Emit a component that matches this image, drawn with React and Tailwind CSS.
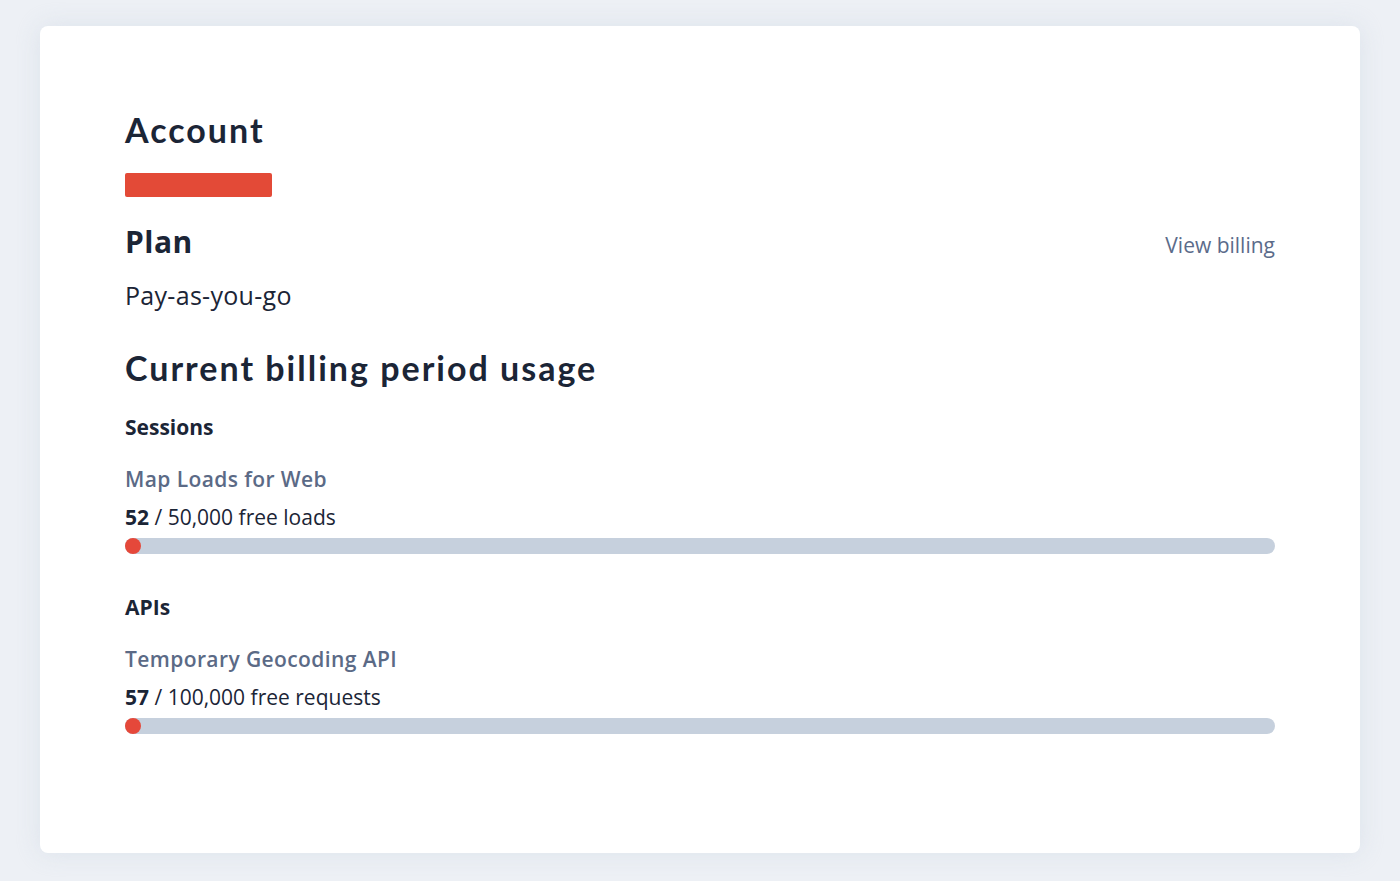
import React from "react";

function Usage({ title, used, total, unit }) {
  return (
    <div className="flex flex-col">
      <div className="mt-[24px] font-['Open_Sans',sans-serif] text-[21px] leading-[28px] font-semibold tracking-[0.4px] text-[#5b6a86]">
        {title}
      </div>
      <div className="mt-[10px] font-['Open_Sans',sans-serif] text-[21px] leading-[28px] text-[#1b2536]">
        <span className="font-bold">{used}</span> / {total} {unit}
      </div>
      <div className="mt-[7px] flex h-[16px] w-full rounded-full bg-[#c6d0dd]">
        <div className="h-[16px] w-[16px] rounded-full bg-[#e5483a]" />
      </div>
    </div>
  );
}

export default function App() {
  return (
    <div className="min-h-[881px] bg-[#edf0f5] px-[40px] pt-[26px] pb-[28px]">
      <div className="flex h-[827px] flex-col rounded-[8px] bg-white px-[85px] pt-[84px] shadow-[0_0_24px_rgba(200,210,225,0.45)]">
        <h1 className="font-['Lato',sans-serif] text-[34px] leading-[40px] font-bold tracking-[2px] text-[#1b2536]">
          Account
        </h1>
        <div className="mt-[23px] h-[24px] w-[147px] rounded-[2px] bg-[#e34a37]" />
        <div className="mt-[28px] flex items-baseline justify-between">
          <h2 className="font-['Open_Sans',sans-serif] text-[30px] leading-[34px] font-bold tracking-[0.5px] text-[#1b2536]">
            Plan
          </h2>
          <span className="font-['Open_Sans',sans-serif] text-[21px] leading-[28px] text-[#5b6b8a]">
            View billing
          </span>
        </div>
        <div className="mt-[21px] font-['Open_Sans',sans-serif] text-[25px] leading-[30px] tracking-[0.3px] text-[#1b2536]">
          Pay-as-you-go
        </div>
        <h2 className="mt-[38px] font-['Lato',sans-serif] text-[34px] leading-[40px] font-bold tracking-[2px] text-[#1b2536]">
          Current billing period usage
        </h2>
        <div className="mt-[25px] font-['Open_Sans',sans-serif] text-[21px] leading-[28px] font-bold text-[#1b2536]">
          Sessions
        </div>
        <Usage title="Map Loads for Web" used="52" total="50,000" unit="free loads" />
        <div className="mt-[39px] font-['Open_Sans',sans-serif] text-[21px] leading-[28px] font-bold text-[#1b2536]">
          APIs
        </div>
        <Usage title="Temporary Geocoding API" used="57" total="100,000" unit="free requests" />
      </div>
    </div>
  );
}
